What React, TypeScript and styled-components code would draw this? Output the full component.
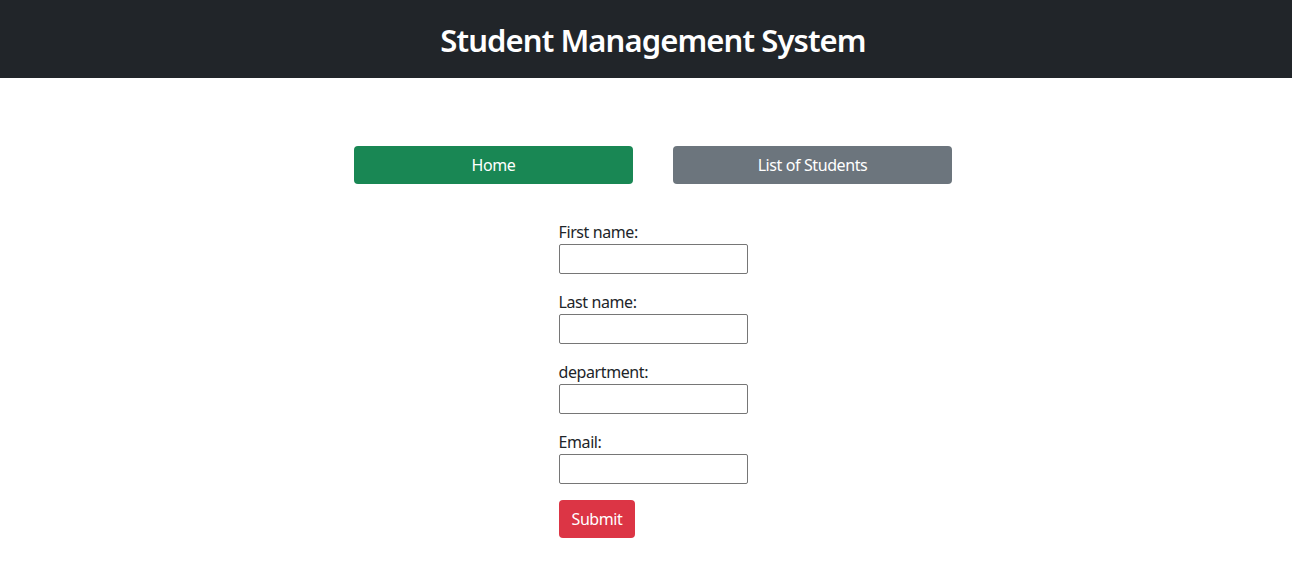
import React from "react";
import styled, { createGlobalStyle } from "styled-components";

const GlobalStyle = createGlobalStyle`
  * { box-sizing: border-box; }
  body {
    margin: 0;
    font-family: "Noto Sans", "Open Sans", sans-serif;
    font-size: 16px;
    line-height: 1.5;
    letter-spacing: -0.4px;
    color: #212529;
    background: #fff;
  }
`;

const Header = styled.header`
  background: #212529;
  height: 78px;
  display: flex;
  align-items: center;
  justify-content: center;
  padding-left: 14px;
`;

const Title = styled.h1`
  margin: 0;
  padding-top: 3px;
  color: #fff;
  font-size: 31px;
  font-weight: 600;
  letter-spacing: -0.9px;
  line-height: 1.2;
`;

const Main = styled.main`
  display: flex;
  flex-direction: column;
  align-items: center;
  padding: 68px 0 0 14px;
`;

const Nav = styled.nav`
  display: flex;
  gap: 40px;
`;

const NavButton = styled.button<{ $variant: "success" | "secondary" }>`
  width: 279px;
  height: 38px;
  border: none;
  border-radius: 4px;
  color: #fff;
  font-family: inherit;
  font-size: 16px;
  letter-spacing: inherit;
  background: ${(p) => (p.$variant === "success" ? "#198754" : "#6c757d")};
  cursor: pointer;
`;

const Form = styled.form`
  display: flex;
  flex-direction: column;
  align-items: flex-start;
  width: 189px;
  margin-top: 36px;
`;

const Field = styled.div`
  display: flex;
  flex-direction: column;
  margin-bottom: 16px;
`;

const Label = styled.label`
  font-size: 16px;
  line-height: 24px;
`;

const Input = styled.input`
  width: 189px;
  height: 30px;
  border: 1px solid #767676;
  border-radius: 2px;
  padding: 1px 2px;
  font-family: inherit;
  font-size: 14px;
`;

const SubmitButton = styled.button`
  height: 38px;
  padding: 0 13px;
  border: none;
  border-radius: 4px;
  background: #dc3545;
  color: #fff;
  font-family: inherit;
  font-size: 16px;
  letter-spacing: inherit;
  cursor: pointer;
`;

const fields = [
  { id: "firstName", label: "First name:" },
  { id: "lastName", label: "Last name:" },
  { id: "department", label: "department:" },
  { id: "email", label: "Email:" },
];

export default function App() {
  return (
    <>
      <GlobalStyle />
      <Header>
        <Title>Student Management System</Title>
      </Header>
      <Main>
        <Nav>
          <NavButton $variant="success">Home</NavButton>
          <NavButton $variant="secondary">List of Students</NavButton>
        </Nav>
        <Form onSubmit={(e) => e.preventDefault()}>
          {fields.map((f) => (
            <Field key={f.id}>
              <Label htmlFor={f.id}>{f.label}</Label>
              <Input id={f.id} type="text" />
            </Field>
          ))}
          <SubmitButton type="submit">Submit</SubmitButton>
        </Form>
      </Main>
    </>
  );
}
